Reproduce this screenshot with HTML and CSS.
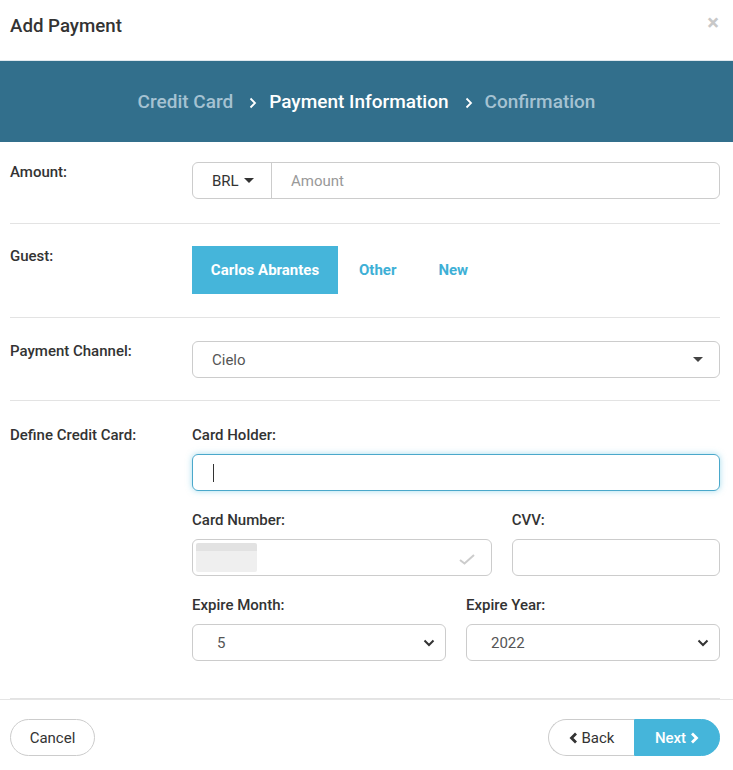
FILE: index.html
```html
<!DOCTYPE html>
<html>
<head>
<meta charset="utf-8">
<link rel="stylesheet" href="styles.css">
</head>
<body>
<div class="modal">
  <div class="modal-header">
    <h1 class="title">Add Payment</h1>
    <span class="close">&times;</span>
  </div>
  <div class="steps">
    <span class="step done">Credit Card</span>
    <svg class="chev" width="8" height="12" viewBox="0 0 8 12"><path d="M1.5 1.5 L6 6 L1.5 10.5" fill="none" stroke="#ffffff" stroke-width="1.8"/></svg>
    <span class="step active">Payment Information</span>
    <svg class="chev" width="8" height="12" viewBox="0 0 8 12"><path d="M1.5 1.5 L6 6 L1.5 10.5" fill="none" stroke="#ffffff" stroke-width="1.8"/></svg>
    <span class="step">Confirmation</span>
  </div>
  <div class="form">
    <div class="row first">
      <div class="label">Amount:</div>
      <div class="control">
        <div class="input-group">
          <div class="addon">BRL <span class="caret"></span></div>
          <div class="field placeholder">Amount</div>
        </div>
      </div>
    </div>
    <div class="row guest-row">
      <div class="label">Guest:</div>
      <div class="control guests">
        <span class="guest selected">Carlos Abrantes</span>
        <span class="guest">Other</span>
        <span class="guest">New</span>
      </div>
    </div>
    <div class="row">
      <div class="label">Payment Channel:</div>
      <div class="control">
        <div class="box select">
          <span class="val">Cielo</span>
          <span class="caret dark"></span>
        </div>
      </div>
    </div>
    <div class="row card-row">
      <div class="label">Define Credit Card:</div>
      <div class="control">
        <div class="grid">
          <div class="col-12">
            <div class="sub">Card Holder:</div>
            <div class="box focus"><span class="cursor"></span></div>
          </div>
          <div class="col-7">
            <div class="sub">Card Number:</div>
            <div class="box number">
              <span class="redact"></span>
              <svg class="check" width="18" height="14" viewBox="0 0 18 14"><path d="M2 8 L6.5 11.5 L16 3" fill="none" stroke="#cccccc" stroke-width="2"/></svg>
            </div>
          </div>
          <div class="col-5">
            <div class="sub">CVV:</div>
            <div class="box"></div>
          </div>
          <div class="col-6">
            <div class="sub">Expire Month:</div>
            <div class="box select native">
              <span class="val">5</span>
              <svg class="down" width="12" height="8" viewBox="0 0 12 8"><path d="M1.5 1.5 L6 6 L10.5 1.5" fill="none" stroke="#333333" stroke-width="2"/></svg>
            </div>
          </div>
          <div class="col-6">
            <div class="sub">Expire Year:</div>
            <div class="box select native">
              <span class="val">2022</span>
              <svg class="down" width="12" height="8" viewBox="0 0 12 8"><path d="M1.5 1.5 L6 6 L10.5 1.5" fill="none" stroke="#333333" stroke-width="2"/></svg>
            </div>
          </div>
        </div>
      </div>
    </div>
  </div>
  <div class="footer">
    <button class="btn pill">Cancel</button>
    <div class="nav">
      <button class="btn back"><svg width="9" height="12" viewBox="0 0 9 12"><path d="M7 1.5 L2.5 6 L7 10.5" fill="none" stroke="#333333" stroke-width="2.8"/></svg>Back</button>
      <button class="btn next">Next<svg width="9" height="12" viewBox="0 0 9 12"><path d="M2 1.5 L6.5 6 L2 10.5" fill="none" stroke="#ffffff" stroke-width="2.8"/></svg></button>
    </div>
  </div>
</div>
</body>
</html>
```
FILE: styles.css
```css
* { box-sizing: border-box; }
html, body { margin: 0; padding: 0; background: #fff; }
body { font-family: Roboto, "Liberation Sans", Arial, sans-serif; color: #333; font-size: 15px; }

.modal { width: 733px; }

.modal-header {
  height: 61px;
  display: flex;
  align-items: center;
  justify-content: space-between;
  padding: 0 14px 8px 10px;
  border-bottom: 1px solid #dfe8ee;
}
.title { margin: 0; font-size: 18.7px; font-weight: 500; color: #333; line-height: 24px; }
.close { color: #c8c8c8; font-size: 22px; font-weight: 700; line-height: 1; margin-top: -6px; }

.steps {
  height: 81px;
  background: #326f8c;
  display: flex;
  align-items: center;
  justify-content: center;
  font-size: 19px;
  font-weight: 500;
}
.step { color: #a5c2d2; }
.step.active { color: #fff; }
.chev { margin: 2px 12px 0 16px; }

.form { padding: 0 13px 0 10px; }
.row {
  display: flex;
  padding: 23px 0 22px 0;
  border-bottom: 1px solid #e3e3e3;
}
.row.first { padding-top: 20px; padding-bottom: 24px; }
.row.guest-row { padding-top: 22px; padding-bottom: 23px; }
.row.card-row { padding-top: 24px; padding-bottom: 37px; }
.label { width: 182px; flex: none; font-weight: 500; font-size: 15px; line-height: 20px; }
.control { flex: 1; }

.input-group {
  display: flex;
  height: 37px;
  border: 1px solid #ccc;
  border-radius: 6px;
}
.addon {
  width: 79px;
  border-right: 1px solid #ccc;
  display: flex;
  align-items: center;
  padding-left: 19px;
  color: #333;
}
.caret {
  display: inline-block;
  width: 0; height: 0;
  border-left: 5px solid transparent;
  border-right: 5px solid transparent;
  border-top: 5px solid #333;
  margin-left: 5px;
}
.field { flex: 1; display: flex; align-items: center; padding-left: 19px; }
.placeholder { color: #999; }

.guests { display: flex; align-items: center; height: 48px; }
.guest {
  height: 48px;
  display: flex;
  align-items: center;
  padding: 0 21px 0 21px;
  font-weight: 700;
  color: #3eb0d6;
}
.guest.selected { background: #45b5da; color: #fff; width: 146px; justify-content: center; padding: 0; }

.box {
  height: 37px;
  border: 1px solid #ccc;
  border-radius: 6px;
  display: flex;
  align-items: center;
}
.select { justify-content: space-between; padding: 0 16px 0 19px; }
.select .val { color: #555; }
.caret.dark { border-top-color: #444; }
.native { padding: 0 10px 0 24px; }

.grid { display: flex; flex-wrap: wrap; margin: 0 -10px; }
.col-12 { width: 100%; padding: 0 10px; }
.col-7 { width: 58.333%; padding: 0 10px; }
.col-5 { width: 41.667%; padding: 0 10px; }
.col-6 { width: 50%; padding: 0 10px; }
.grid > div { margin-bottom: 19px; }
.grid > div:nth-last-child(-n+2) { margin-bottom: 0; }
.sub { font-weight: 500; line-height: 20px; margin-bottom: 9px; }

.focus {
  border-color: #4aa8cb;
  box-shadow: 0 0 6px rgba(91, 192, 222, 0.55);
}
.cursor { display: block; width: 1px; height: 18px; background: #333; margin-left: 20px; }

.number { justify-content: space-between; padding: 3px 15px 3px 3px; }
.redact {
  width: 61px;
  height: 29px;
  background: linear-gradient(#e2e2e2 0, #e2e2e2 8px, #efefef 8px);
  border-radius: 2px;
}
.check { margin-top: 2px; }

.footer {
  border-top: 1px solid #e5e5e5;
  padding: 19px 13px 14px 10px;
  display: flex;
  justify-content: space-between;
  align-items: center;
}
.btn {
  font-family: Roboto, "Liberation Sans", Arial, sans-serif;
  font-size: 15px;
  height: 37px;
  border: 1px solid #ccc;
  background: #fff;
  color: #333;
  display: inline-flex;
  align-items: center;
  justify-content: center;
  gap: 4px;
  cursor: pointer;
}
.pill { width: 85px; border-radius: 19px; }
.nav { display: flex; }
.back { width: 86px; border-radius: 19px 0 0 19px; border-right: none; }
.next { width: 86px; border-radius: 0 19px 19px 0; background: #45b5da; border-color: #45b5da; color: #fff; font-weight: 500; }
```
